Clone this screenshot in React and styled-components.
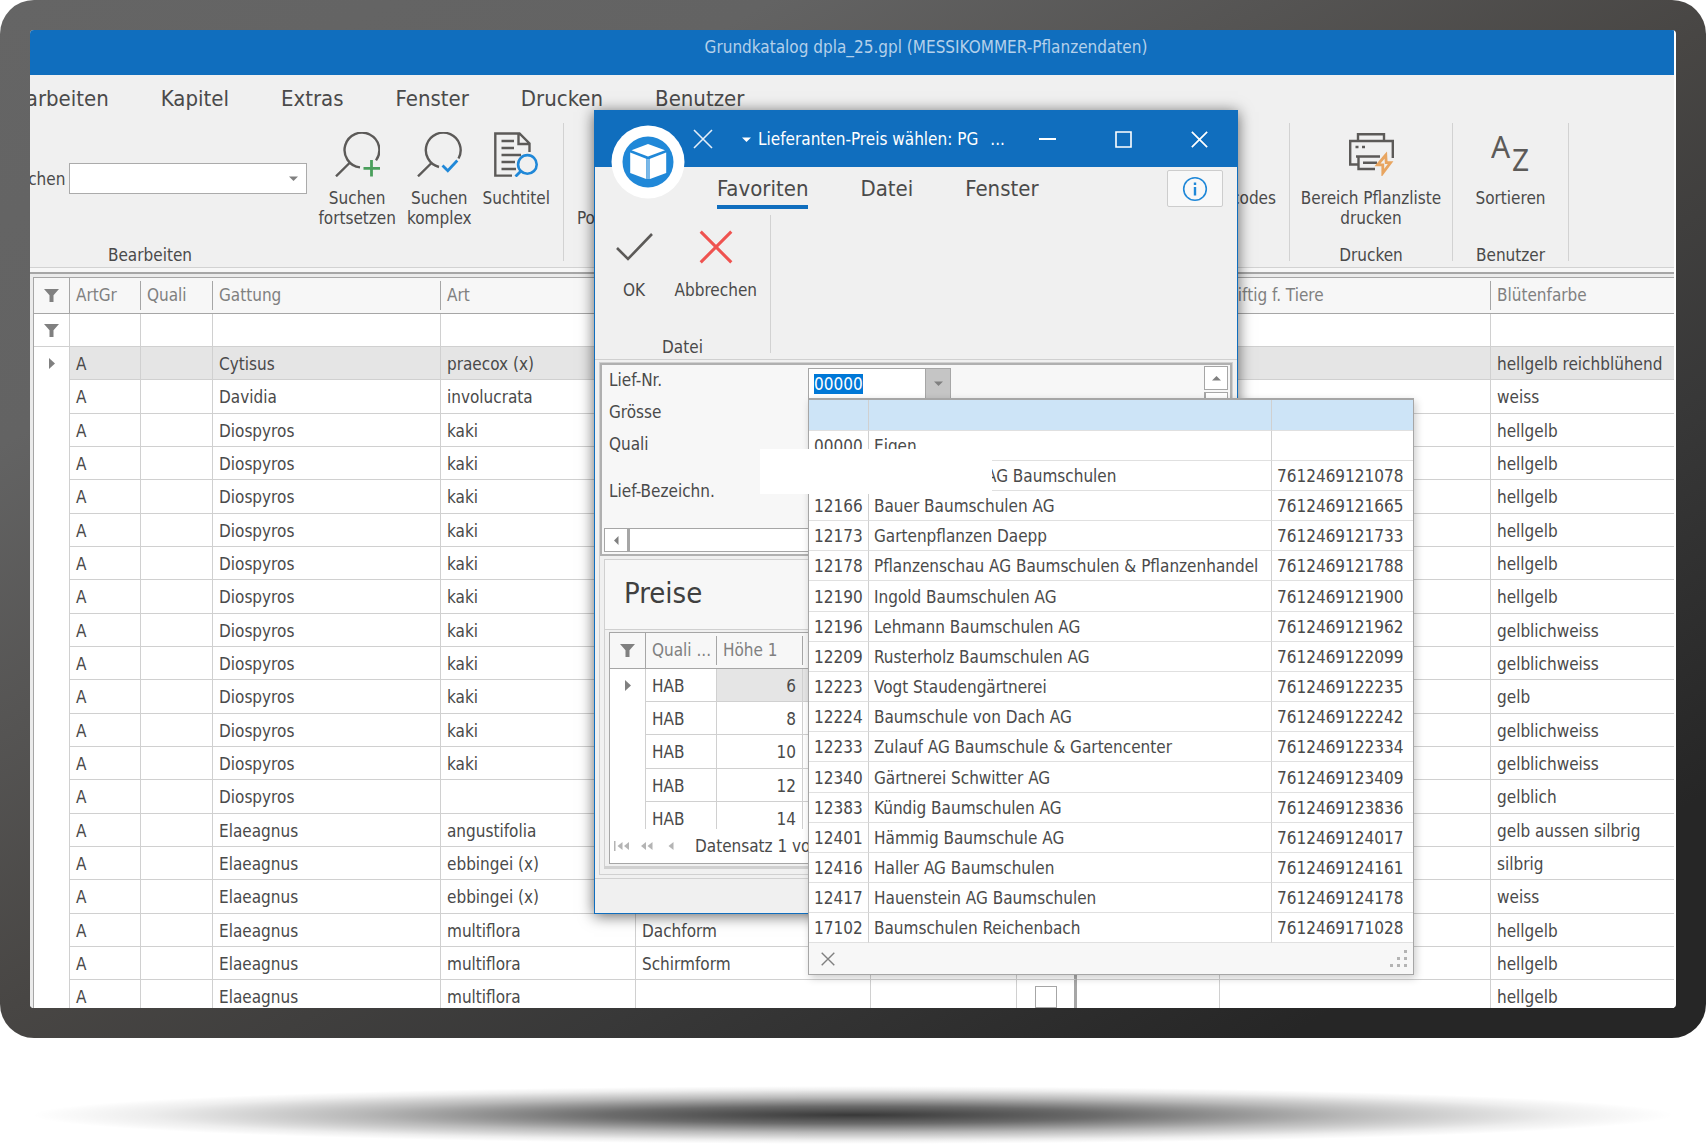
import React, { useEffect, useRef } from 'react';
import styled, { createGlobalStyle } from 'styled-components';

const GlobalStyle = createGlobalStyle`
  * {
    box-sizing: border-box;
  }

  body {
    margin: 0;
    background: #fff;
    color: #4a4a4a;
    font-family: 'DejaVu Sans Condensed', 'Noto Sans', sans-serif;
    font-size: 17px;
    line-height: 20px;
  }

  button, input {
    margin: 0;
    padding: 0;
    border: 0;
    background: none;
    color: inherit;
    font: inherit;
  }

  svg {
    display: block;
  }
`;

const Page = styled.div`
  display: flex;
  flex-direction: column;
  height: 100vh;
  overflow: hidden;
`;

const Monitor = styled.div`
  flex: 1;
  display: flex;
  min-height: 0;
  padding: 30px;
  border-radius: 34px;
  background: linear-gradient(150deg, #656565 0%, #636363 22%, #484644 50%, #383838 68%, #262626 88%);
`;

const Screen = styled.main`
  position: relative;
  flex: 1;
  display: flex;
  flex-direction: column;
  min-width: 0;
  padding-right: 2px;
  border-radius: 4px;
  overflow: hidden;
  background: #fff;
  white-space: nowrap;
`;

const FloorShadow = styled.div`
  height: 58px;
  margin: 48px 32px 0;
  background: radial-gradient(closest-side, rgba(0, 0, 0, .78), rgba(0, 0, 0, .58) 30%, rgba(0, 0, 0, .28) 60%, rgba(0, 0, 0, .07) 86%, transparent);
`;

const TitleBar = styled.header`
  flex: none;
  display: flex;
  align-items: center;
  justify-content: center;
  height: 45px;
  padding: 0 0 12px 148px;
  background: #106ebe;
  color: #b4d0ea;
`;

const Menu = styled.nav`
  flex: none;
  display: flex;
  gap: 52px;
  height: 48px;
  margin-left: ${({ $shift }) => $shift}px;
`;

const MenuItem = styled.button`
  height: ${({ $short }) => ($short ? 42 : 45)}px;
  padding-top: 6px;
  border-bottom: 4px solid ${({ $active }) => ($active ? '#106ebe' : 'transparent')};
  font-size: 22px;
  line-height: 24px;
`;

const RibbonArea = styled.div`
  flex: none;
  background: #f0f0f0;
`;

const Ribbon = styled.div`
  display: flex;
  height: 144px;
  padding-bottom: 6px;
`;

const Group = styled.div`
  display: flex;
  flex-direction: column;
  flex: none;
  width: ${({ $width }) => $width}px;
  margin-left: ${({ $shift }) => $shift || 0}px;
  border-right: 1px solid #d2d2d2;
`;

const GroupItems = styled.div`
  flex: 1;
  display: flex;
  justify-content: ${({ $justify }) => $justify || 'center'};
  gap: ${({ $gap }) => $gap || 11}px;
  padding: 9px 13px 0;
`;

const GroupLabel = styled.div`
  line-height: 12px;
  text-align: center;
`;

const Tool = styled.button`
  display: flex;
  flex-direction: column;
  align-items: center;
  align-self: flex-start;
  gap: 11px;
  line-height: 20px;
  white-space: pre;
`;

const ToolIcon = styled.span`
  display: flex;
  align-items: center;
  justify-content: center;
  min-width: 45px;
  height: 45px;
`;

const SearchLabel = styled.label`
  display: flex;
  align-items: center;
  gap: 4px;
  height: 31px;
  margin-top: 31px;
`;

const SearchBox = styled.span`
  display: flex;
  align-items: center;
  width: 238px;
  height: 31px;
  padding-right: 7px;
  border: 1px solid #ababab;
  background: #fff;
`;

const SearchInput = styled.input`
  flex: 1;
  min-width: 0;
  padding-left: 6px;
  outline: none;
`;

const Splitter = styled.div`
  flex: none;
  height: 7px;
  border-top: 1px solid #d2d2d2;
  border-bottom: 2px solid #a6a6a6;
  background: #f7f7f7;
`;

const GridArea = styled.div`
  flex: 1;
  min-height: 0;
  overflow: hidden;
  padding: 3px 0 0 3px;
  background: #ebebeb;
`;

const Table = styled.table`
  width: 100%;
  table-layout: fixed;
  border-collapse: separate;
  border-spacing: 0;
  border: 1px solid #a6a6a6;
  border-right: 0;
  background: #fff;

  th, td {
    padding: 0;
    overflow: hidden;
    text-align: left;
    font-weight: 400;
  }

  th:last-child span, td:last-child {
    border-right: 0;
  }
`;

const HeadCell = styled.th`
  height: 36px;
  border-bottom: 1px solid #a6a6a6;
  border-right: ${({ $solid }) => ($solid ? '1px solid #a6a6a6' : '0')};
  background: #f7f7f7;
  color: #808080;

  > svg {
    margin: 0 auto;
  }
`;

const HeadLabel = styled.span`
  display: block;
  height: 29px;
  padding-left: 6px;
  border-right: 1px solid #a6a6a6;
  line-height: 29px;
`;

const Marker = styled.td`
  border-right: 1px solid #d0d0d0;
  border-bottom: ${({ $line }) => ($line ? '1px solid #d0d0d0' : '0')};
  background: #fff;

  svg {
    margin: 0 auto;
  }
`;

const Cell = styled.td`
  border-right: ${({ $heavy }) => ($heavy ? '3px solid #a6a6a6' : '1px solid #d0d0d0')};
  border-bottom: 1px solid #d0d0d0;
  background: ${({ $selected }) => ($selected ? '#e5e5e5' : 'transparent')};

  && {
    padding: 1px 6px 0;
    text-align: ${({ $right }) => ($right ? 'right' : 'left')};
  }
`;

const GridRow = styled.tr`
  height: 33px;

  &:nth-child(3n) {
    height: 34px;
  }
`;

const CheckBox = styled.input`
  display: block;
  width: 22px;
  height: 22px;
  margin: 0 auto;
  appearance: none;
  border: 1px solid #a6a6a6;
  background: #fff;
`;

const Dialog = styled.section`
  position: absolute;
  top: 80px;
  left: 564px;
  width: 644px;
  border: 1px solid #106ebe;
  background: #f0f0f0;
  box-shadow: 0 2px 14px rgba(0, 0, 0, .6);
`;

const DialogTitle = styled.header`
  display: flex;
  align-items: center;
  height: 56px;
  padding-left: 98px;
  background: #106ebe;
  color: #fff;
`;

const TitleMenu = styled.button`
  margin: 0 6px 0 28px;
`;

const DialogCaption = styled.span`
  flex: 1;
  display: flex;
  gap: 12px;
`;

const WindowButton = styled.button`
  display: flex;
  align-items: center;
  justify-content: center;
  width: 76px;
  height: 56px;
`;

const Logo = styled.div`
  position: absolute;
  top: 14px;
  left: 16px;
`;

const DialogTabs = styled.div`
  display: flex;
  justify-content: space-between;
  padding: 0 14px 0 122px;
`;

const InfoButton = styled.button`
  display: flex;
  align-items: center;
  justify-content: center;
  width: 56px;
  height: 37px;
  margin-top: 3px;
  border: 1px solid #cdcdcd;
  border-radius: 2px;
  background: #f8f8f8;
`;

const DialogBody = styled.div`
  padding: 2px 4px 3px;
  border-top: 1px solid #d0d0d0;
  border-bottom: 1px solid #d0d0d0;
`;

const BodyFrame = styled.div`
  padding-bottom: 5px;
  border: 1px solid #d0d0d0;
`;

const FormPanel = styled.div`
  padding: 0 2px 2px;
  border: 2px solid #b0b0b0;
  background: #f7f7f7;
`;

const FormColumns = styled.div`
  display: flex;
  justify-content: space-between;
  height: 163px;
`;

const Fields = styled.div`
  display: grid;
  grid-template-columns: 199px auto;
  grid-template-rows: 32px 32px 32px 60px;
  padding-left: 5px;
`;

const FieldLabel = styled.label`
  grid-column: 1;
  line-height: 30px;
  align-self: ${({ $center }) => ($center ? 'center' : 'start')};
`;

const Combo = styled.div`
  position: relative;
  display: flex;
  width: 143px;
  height: 31px;
  margin-top: 3px;
  border: 1px solid #a6a6a6;
  background: #fff;
`;

const ComboInput = styled.input`
  flex: 1;
  min-width: 0;
  padding-left: 5px;
  outline: none;

  &::selection {
    background: #0078d7;
    color: #fff;
  }
`;

const ComboButton = styled.button`
  display: flex;
  align-items: center;
  justify-content: center;
  width: 25px;
  border-left: 1px solid #a6a6a6;
  background: #c5c5c5;
`;

const Popup = styled.div`
  position: absolute;
  top: 29px;
  left: -1px;
  z-index: 2;
  width: 606px;
  border: 1px solid #a6a6a6;
  border-top-width: 2px;
  background: #f7f7f7;
  box-shadow: 2px 3px 8px rgba(0, 0, 0, .2);
`;

const PopupTable = styled(Table)`
  border: 0;

  td {
    border-bottom-color: #e0e0e0;
  }

  && td {
    padding-left: 5px;
  }
`;

const SupplierRow = styled.tr`
  height: 30px;
  background: ${({ $active }) => ($active ? '#cde4f7' : '#fff')};

  &:nth-child(6n + 1) {
    height: 31px;
  }
`;

const CoveredName = styled.span`
  padding-left: 112px;
`;

const PopupFooter = styled.div`
  display: flex;
  align-items: center;
  justify-content: space-between;
  height: 31px;
  padding: 0 6px 0 12px;
`;

const Cover = styled.div`
  position: absolute;
  top: 49px;
  left: -49px;
  width: 232px;
  height: 45px;
  background: #fff;
`;

const ScrollUp = styled.div`
  display: flex;
  flex-direction: column;
  gap: 2px;
  width: 24px;
  padding-top: 1px;
`;

const ScrollAcross = styled.div`
  display: flex;
  margin-right: 26px;
`;

const ScrollButton = styled.button`
  display: flex;
  align-items: center;
  justify-content: center;
  width: 24px;
  height: 24px;
  border: 1px solid #a6a6a6;
  background: #fff;
`;

const ScrollThumb = styled.div`
  flex: 1;
  border: 1px solid #a6a6a6;
  border-left-width: 2px;
  background: #fff;
`;

const PricePanel = styled.section`
  margin: 3px 0 0 4px;
  border: 1px solid #d0d0d0;
  border-bottom: 3px solid #d0d0d0;
  background: #f7f7f7;
`;

const PriceHeading = styled.h2`
  height: 69px;
  margin: 0;
  padding: 0 19px;
  font-size: 29px;
  font-weight: 400;
  line-height: 66px;
  color: #404040;
`;

const PriceGrid = styled.div`
  padding: 2px 4px;
  border-top: 1px solid #d0d0d0;
  background: #f0f0f0;
`;

const PriceScroll = styled.div`
  height: 197px;
  overflow: hidden;

  table {
    border-bottom: 0;
  }
`;

const Navigator = styled.div`
  display: flex;
  align-items: center;
  height: 35px;
  padding-left: 4px;
  border: 1px solid #a6a6a6;
  border-top: 0;
  background: #fff;
`;

const NavButton = styled.button`
  width: 27px;
`;

const DialogFooter = styled.footer`
  height: 34px;
`;

const columns = ['ArtGr', 'Quali', 'Gattung', 'Art', '', '', '', '', 'Giftig f. Tiere', 'Blütenfarbe'];
const columnWidths = [36, 71, 72, 228, 195, 235, 146, 60, 143, 271, null];

const plants = [
  ['Cytisus', 'praecox (x)', '', 'hellgelb reichblühend'],
  ['Davidia', 'involucrata', '', 'weiss'],
  ['Diospyros', 'kaki', '', 'hellgelb'],
  ['Diospyros', 'kaki', '', 'hellgelb'],
  ['Diospyros', 'kaki', '', 'hellgelb'],
  ['Diospyros', 'kaki', '', 'hellgelb'],
  ['Diospyros', 'kaki', '', 'hellgelb'],
  ['Diospyros', 'kaki', '', 'hellgelb'],
  ['Diospyros', 'kaki', '', 'gelblichweiss'],
  ['Diospyros', 'kaki', '', 'gelblichweiss'],
  ['Diospyros', 'kaki', '', 'gelb'],
  ['Diospyros', 'kaki', '', 'gelblichweiss'],
  ['Diospyros', 'kaki', '', 'gelblichweiss'],
  ['Diospyros', '', '', 'gelblich'],
  ['Elaeagnus', 'angustifolia', '', 'gelb aussen silbrig'],
  ['Elaeagnus', 'ebbingei (x)', '', 'silbrig'],
  ['Elaeagnus', 'ebbingei (x)', '', 'weiss'],
  ['Elaeagnus', 'multiflora', 'Dachform', 'hellgelb'],
  ['Elaeagnus', 'multiflora', 'Schirmform', 'hellgelb'],
  ['Elaeagnus', 'multiflora', '', 'hellgelb'],
];

const suppliers = [
  ['', '', ''],
  ['00000', 'Eigen', ''],
  ['', 'AG Baumschulen', '7612469121078'],
  ['12166', 'Bauer Baumschulen AG', '7612469121665'],
  ['12173', 'Gartenpflanzen Daepp', '7612469121733'],
  ['12178', 'Pflanzenschau AG Baumschulen & Pflanzenhandel', '7612469121788'],
  ['12190', 'Ingold Baumschulen AG', '7612469121900'],
  ['12196', 'Lehmann Baumschulen AG', '7612469121962'],
  ['12209', 'Rusterholz Baumschulen AG', '7612469122099'],
  ['12223', 'Vogt Staudengärtnerei', '7612469122235'],
  ['12224', 'Baumschule von Dach AG', '7612469122242'],
  ['12233', 'Zulauf AG Baumschule & Gartencenter', '7612469122334'],
  ['12340', 'Gärtnerei Schwitter AG', '7612469123409'],
  ['12383', 'Kündig Baumschulen AG', '7612469123836'],
  ['12401', 'Hämmig Baumschule AG', '7612469124017'],
  ['12416', 'Haller AG Baumschulen', '7612469124161'],
  ['12417', 'Hauenstein AG Baumschulen', '7612469124178'],
  ['17102', 'Baumschulen Reichenbach', '7612469171028'],
];

const prices = [6, 8, 10, 12, 14];

const Funnel = () => (
  <svg width="15" height="13" viewBox="0 0 15 13" fill="#808080">
    <path d="M0 0H15L9.5 6.2V13H5.5V6.2Z" />
  </svg>
);

const RowArrow = () => (
  <svg width="6" height="11" viewBox="0 0 6 11" fill="#808080">
    <path d="M0 0L6 5.5L0 11Z" />
  </svg>
);

const Arrow = ({ color = '#808080', turn = 0 }) => (
  <svg width="11" height="11" viewBox="0 0 11 11" fill={color}>
    <path d="M1 3.5H10L5.5 8Z" transform={`rotate(${turn} 5.5 5.5)`} />
  </svg>
);

const Cross = ({ size, color, width = 2 }) => (
  <svg width={size} height={size} viewBox="0 0 20 20" stroke={color} strokeWidth={width}>
    <path d="M1 1L19 19M19 1L1 19" />
  </svg>
);

const SearchPlusIcon = () => (
  <svg width="45" height="45" viewBox="0 0 45 45" fill="none" stroke="#5c5a58" strokeWidth="2.4">
    <path d="M25 35.4A17.4 17.4 0 1 1 41 28.4M15 30.5L1 44.3" />
    <path d="M36.5 28V44.6M28.5 36.3H45" stroke="#4a9f5c" strokeWidth="2.8" />
  </svg>
);

const SearchCheckIcon = () => (
  <svg width="45" height="45" viewBox="0 0 45 45" fill="none" stroke="#5c5a58" strokeWidth="2.4">
    <path d="M22 35A17.4 17.4 0 1 1 41.5 26.5M15 30.5L1 44.3" />
    <path d="M25.5 33.5L30.8 38.8L40.3 28.5" stroke="#2088d8" strokeWidth="2.8" />
  </svg>
);

const SearchTitleIcon = () => (
  <svg width="45" height="45" viewBox="0 0 45 45" fill="none" stroke="#5c5a58" strokeWidth="2.4">
    <path d="M18 43.6H1.3V1.5H25.5L35.5 11.5V20M24.5 2V12H35" />
    <path d="M7.5 9H20M7.5 16H20M7.5 23H27M7.5 30H21M7.5 37H22" />
    <path d="M27 39L21.5 44.5" stroke="#2088d8" strokeWidth="2.8" />
    <circle cx="33.4" cy="32.4" r="9.3" stroke="#2088d8" strokeWidth="2.6" />
  </svg>
);

const PrinterIcon = () => (
  <svg width="45" height="43" viewBox="0 0 45 43" fill="none" stroke="#5c5a58" strokeWidth="2.4">
    <path d="M9 8V1.2H35V8M9 31.5H1.2V8H43.8V25M7 23.5H31M9.5 24V36H26M14 29.8H28" />
    <path d="M6.5 14H9.5M13 14H16" />
    <path d="M36.8 22L28.5 31.8H33.8V40L41.6 29.6H37.2Z" stroke="#e8a560" strokeWidth="2.8" />
  </svg>
);

const SortIcon = () => (
  <svg width="40" height="38" viewBox="0 0 40 38" fill="#5c5a58" fontFamily="Noto Sans, sans-serif" fontSize="30">
    <text x="0" y="22">A</text>
    <text x="21" y="35">Z</text>
  </svg>
);

const CubeLogo = () => (
  <svg width="74" height="74" viewBox="0 0 74 74">
    <circle cx="37" cy="37" r="36.5" fill="#fff" />
    <circle cx="37" cy="37" r="25.5" fill="#2088d8" />
    <path d="M37 19L54 25.2L37 31.6L20.5 25.2Z" fill="#fff" />
    <path d="M19.2 27.4L35.2 33.8V54L19.2 48Z" fill="#fff" />
    <path d="M55.2 27.4L39 33.8V54L55.2 48Z" fill="#fff" />
    <path d="M35.2 34H39V54H35.2Z" fill="#7ab8e8" />
  </svg>
);

const InfoIcon = () => (
  <svg width="26" height="26" viewBox="0 0 26 26" fill="none" stroke="#2088d8">
    <circle cx="13" cy="13" r="11.3" strokeWidth="1.6" />
    <path d="M13 11V19.5M13 6.5V9" strokeWidth="2.4" />
  </svg>
);

const PlantTable = () => (
  <Table>
    <colgroup>
      {columnWidths.map((width, i) => <col key={i} style={width ? { width } : undefined} />)}
    </colgroup>
    <thead>
      <tr>
        <HeadCell $solid><Funnel /></HeadCell>
        {columns.map((name, i) => <HeadCell key={i}><HeadLabel>{name}</HeadLabel></HeadCell>)}
      </tr>
    </thead>
    <tbody>
      <GridRow>
        <Marker $line><Funnel /></Marker>
        {columns.map((name, i) => <Cell key={i} $heavy={i === 6} />)}
      </GridRow>
      {plants.map(([genus, species, form, color], i) => {
        const selected = i === 0;
        return (
          <GridRow key={i}>
            <Marker>{selected && <RowArrow />}</Marker>
            <Cell $selected={selected}>A</Cell>
            <Cell $selected={selected} />
            <Cell $selected={selected}>{genus}</Cell>
            <Cell $selected={selected}>{species}</Cell>
            <Cell $selected={selected}>{form}</Cell>
            <Cell $selected={selected} />
            <Cell $selected={selected} $heavy><CheckBox type="checkbox" aria-label={genus} /></Cell>
            <Cell $selected={selected} />
            <Cell $selected={selected} />
            <Cell $selected={selected}>{color}</Cell>
          </GridRow>
        );
      })}
    </tbody>
  </Table>
);

const SupplierPopup = () => (
  <Popup>
    <PopupTable>
      <colgroup>
        <col style={{ width: 60 }} />
        <col />
        <col style={{ width: 141 }} />
      </colgroup>
      <tbody>
        {suppliers.map(([number, name, gln], i) => (
          <SupplierRow key={i} $active={i === 0}>
            <Cell>{number}</Cell>
            <Cell>{i === 2 ? <CoveredName>{name}</CoveredName> : name}</Cell>
            <Cell>{gln}</Cell>
          </SupplierRow>
        ))}
      </tbody>
    </PopupTable>
    <PopupFooter>
      <button type="button" aria-label="Schliessen"><Cross size={14} color="#808080" width={2} /></button>
      <svg width="17" height="17" viewBox="0 0 17 17" fill="#b4b4b4">
        <path d="M14 0h3v3h-3zM14 7h3v3h-3zM7 7h3v3h-3zM14 14h3v3h-3zM7 14h3v3h-3zM0 14h3v3h-3z" />
      </svg>
    </PopupFooter>
    <Cover />
  </Popup>
);

const PriceTable = () => (
  <Table>
    <colgroup>
      <col style={{ width: 36 }} />
      <col style={{ width: 71 }} />
      <col style={{ width: 86 }} />
      <col />
    </colgroup>
    <thead>
      <tr>
        <HeadCell $solid><Funnel /></HeadCell>
        <HeadCell><HeadLabel>Quali ...</HeadLabel></HeadCell>
        <HeadCell><HeadLabel>Höhe 1</HeadLabel></HeadCell>
        <HeadCell />
      </tr>
    </thead>
    <tbody>
      {prices.map((height, i) => (
        <GridRow key={height}>
          <Marker>{i === 0 && <RowArrow />}</Marker>
          <Cell>HAB</Cell>
          <Cell $right $selected={i === 0}>{height}</Cell>
          <Cell $selected={i === 0} />
        </GridRow>
      ))}
    </tbody>
  </Table>
);

const SupplierDialog = () => {
  const numberInput = useRef(null);

  useEffect(() => {
    numberInput.current.focus();
    numberInput.current.select();
  }, []);

  return (
    <Dialog>
      <DialogTitle>
        <button type="button" aria-label="Abbrechen"><Cross size={20} color="#e4eef8" width={1.6} /></button>
        <TitleMenu type="button" aria-label="Menü"><Arrow color="#fff" /></TitleMenu>
        <DialogCaption>
          <span>Lieferanten-Preis wählen: PG</span>
          <span>...</span>
        </DialogCaption>
        <WindowButton type="button" aria-label="Minimieren">
          <svg width="17" height="2" viewBox="0 0 17 2"><path d="M0 0H17V2H0Z" fill="#fff" /></svg>
        </WindowButton>
        <WindowButton type="button" aria-label="Maximieren">
          <svg width="17" height="17" viewBox="0 0 17 17"><path d="M1 1H16V16H1Z" fill="none" stroke="#fff" strokeWidth="1.6" /></svg>
        </WindowButton>
        <WindowButton type="button" aria-label="Schliessen"><Cross size={17} color="#fff" /></WindowButton>
      </DialogTitle>
      <Logo><CubeLogo /></Logo>
      <DialogTabs>
        <Menu $shift={0}>
          <MenuItem $short $active>Favoriten</MenuItem>
          <MenuItem $short>Datei</MenuItem>
          <MenuItem $short>Fenster</MenuItem>
        </Menu>
        <InfoButton type="button" aria-label="Info"><InfoIcon /></InfoButton>
      </DialogTabs>
      <Ribbon>
        <Group $width={176}>
          <GroupItems $justify="flex-end" $gap={18}>
            <Tool>
              <ToolIcon>
                <svg width="37" height="28" viewBox="0 0 37 28" fill="none" stroke="#5c5a58" strokeWidth="2.6">
                  <path d="M1 15L12 26L36 1" />
                </svg>
              </ToolIcon>
              OK
            </Tool>
            <Tool>
              <ToolIcon><Cross size={34} color="#ef5350" width={1.8} /></ToolIcon>
              Abbrechen
            </Tool>
          </GroupItems>
          <GroupLabel>Datei</GroupLabel>
        </Group>
      </Ribbon>
      <DialogBody>
        <BodyFrame>
          <FormPanel>
            <FormColumns>
              <Fields>
                <FieldLabel htmlFor="supplier">Lief-Nr.</FieldLabel>
                <Combo>
                  <ComboInput id="supplier" ref={numberInput} defaultValue="00000" />
                  <ComboButton type="button" aria-label="Auswahl"><Arrow /></ComboButton>
                  <SupplierPopup />
                </Combo>
                <FieldLabel as="span">Grösse</FieldLabel>
                <FieldLabel as="span">Quali</FieldLabel>
                <FieldLabel as="span" $center>Lief-Bezeichn.</FieldLabel>
              </Fields>
              <ScrollUp>
                <ScrollButton type="button" aria-label="Nach oben"><Arrow turn={180} /></ScrollButton>
                <ScrollThumb />
              </ScrollUp>
            </FormColumns>
            <ScrollAcross>
              <ScrollButton type="button" aria-label="Nach links"><Arrow turn={90} /></ScrollButton>
              <ScrollThumb />
            </ScrollAcross>
          </FormPanel>
          <PricePanel>
            <PriceHeading>Preise</PriceHeading>
            <PriceGrid>
              <PriceScroll><PriceTable /></PriceScroll>
              <Navigator>
                <NavButton type="button" aria-label="Erster">
                  <svg width="16" height="10" viewBox="0 0 16 10" fill="#b4b4b4"><path d="M0 0H1.5V10H0ZM8.5 1V9L3.5 5ZM15 1V9L10 5Z" /></svg>
                </NavButton>
                <NavButton type="button" aria-label="Vorige Seite">
                  <svg width="12" height="10" viewBox="0 0 12 10" fill="#b4b4b4"><path d="M5 1V9L0 5ZM11.5 1V9L6.5 5Z" /></svg>
                </NavButton>
                <NavButton type="button" aria-label="Voriger">
                  <svg width="6" height="10" viewBox="0 0 6 10" fill="#b4b4b4"><path d="M5.5 1V9L0.5 5Z" /></svg>
                </NavButton>
                <span>Datensatz 1 von 5</span>
              </Navigator>
            </PriceGrid>
          </PricePanel>
        </BodyFrame>
      </DialogBody>
      <DialogFooter />
    </Dialog>
  );
};

const App = () => (
  <Page>
    <GlobalStyle />
    <Monitor>
      <Screen>
        <TitleBar>Grundkatalog dpla_25.gpl (MESSIKOMMER-Pflanzendaten)</TitleBar>
        <RibbonArea>
          <Menu $shift={-30}>
            {['Bearbeiten', 'Kapitel', 'Extras', 'Fenster', 'Drucken', 'Benutzer'].map((name) => (
              <MenuItem key={name}>{name}</MenuItem>
            ))}
          </Menu>
          <Ribbon>
            <Group $width={827} $shift={-293}>
              <GroupItems $justify="flex-end">
                <SearchLabel>
                  Suchen
                  <SearchBox>
                    <SearchInput />
                    <Arrow />
                  </SearchBox>
                </SearchLabel>
                <Tool><ToolIcon><SearchPlusIcon /></ToolIcon>{'Suchen\nfortsetzen'}</Tool>
                <Tool><ToolIcon><SearchCheckIcon /></ToolIcon>{'Suchen\nkomplex'}</Tool>
                <Tool><ToolIcon><SearchTitleIcon /></ToolIcon>Suchtitel</Tool>
              </GroupItems>
              <GroupLabel>Bearbeiten</GroupLabel>
            </Group>
            <Group $width={726}>
              <GroupItems $justify="space-between">
                <Tool><ToolIcon />{'\u00a0\nPosition'}</Tool>
                <Tool><ToolIcon />Barcodes</Tool>
              </GroupItems>
            </Group>
            <Group $width={163}>
              <GroupItems>
                <Tool><ToolIcon><PrinterIcon /></ToolIcon>{'Bereich Pflanzliste\ndrucken'}</Tool>
              </GroupItems>
              <GroupLabel>Drucken</GroupLabel>
            </Group>
            <Group $width={116}>
              <GroupItems>
                <Tool><ToolIcon><SortIcon /></ToolIcon>Sortieren</Tool>
              </GroupItems>
              <GroupLabel>Benutzer</GroupLabel>
            </Group>
          </Ribbon>
        </RibbonArea>
        <Splitter />
        <GridArea>
          <PlantTable />
        </GridArea>
        <SupplierDialog />
      </Screen>
    </Monitor>
    <FloorShadow />
  </Page>
);

export default App;
